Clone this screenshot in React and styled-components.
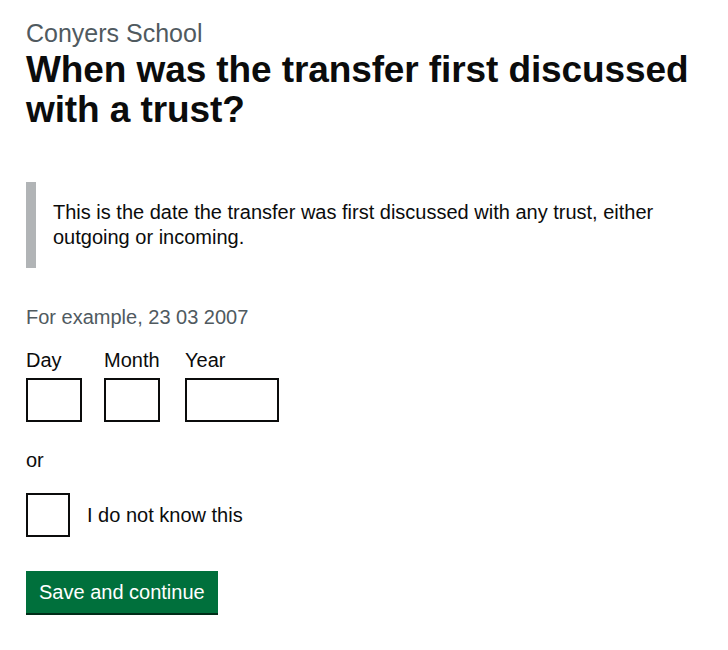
import React from "react";
import styled, { createGlobalStyle } from "styled-components";

const GlobalStyle = createGlobalStyle`
  body {
    margin: 0;
    background: #ffffff;
    font-family: "Liberation Sans", Arial, sans-serif;
    color: #0b0c0c;
  }
`;

const Page = styled.main`
  padding: 18px 26px 30px 26px;
`;

const Caption = styled.span`
  display: block;
  font-size: 25px;
  line-height: 30px;
  margin-bottom: 2px;
  color: #505a5f;
`;

const Heading = styled.h1`
  margin: 0 0 52px 0;
  font-size: 37px;
  line-height: 40px;
  font-weight: 700;
  letter-spacing: -0.1px;
`;

const Inset = styled.div`
  border-left: 10px solid #b1b4b6;
  padding: 18px 15px 18px 17px;
  max-width: 620px;
  font-size: 20px;
  line-height: 25px;
  margin-bottom: 37px;
`;

const Hint = styled.div`
  font-size: 20px;
  line-height: 25px;
  color: #505a5f;
  margin-bottom: 18px;
`;

const DateRow = styled.div`
  display: flex;
  gap: 22px;
`;

const DateItem = styled.div`
  display: flex;
  flex-direction: column;
  min-width: ${(p) => p.$width}px;
`;

const Label = styled.label`
  font-size: 20px;
  line-height: 25px;
  margin-bottom: 5px;
`;

const DateInput = styled.input`
  box-sizing: border-box;
  width: ${(p) => p.$width}px;
  height: 44px;
  border: 2px solid #0b0c0c;
  border-radius: 0;
  margin: 0;
  font: inherit;
`;

const Or = styled.p`
  margin: 26px 0 20px 0;
  font-size: 20px;
  line-height: 25px;
`;

const CheckRow = styled.div`
  display: flex;
  align-items: center;
  gap: 17px;
  margin-bottom: 34px;
`;

const CheckBox = styled.span`
  box-sizing: border-box;
  width: 44px;
  height: 44px;
  border: 2px solid #0b0c0c;
`;

const CheckLabel = styled.span`
  font-size: 20px;
  line-height: 25px;
`;

const Button = styled.button`
  background: #00703c;
  color: #ffffff;
  border: 0;
  border-radius: 0;
  box-shadow: 0 2px 0 #002d18;
  padding: 9px 13px 9px 13px;
  font-family: inherit;
  font-size: 20px;
  line-height: 24px;
  cursor: pointer;
`;

export default function App() {
  return (
    <>
      <GlobalStyle />
      <Page>
        <Caption>Conyers School</Caption>
        <Heading>When was the transfer first discussed with a trust?</Heading>
        <Inset>
          This is the date the transfer was first discussed with any trust, either outgoing or incoming.
        </Inset>
        <Hint>For example, 23 03 2007</Hint>
        <DateRow>
          <DateItem $width={56}>
            <Label>Day</Label>
            <DateInput $width={56} />
          </DateItem>
          <DateItem $width={59}>
            <Label>Month</Label>
            <DateInput $width={56} />
          </DateItem>
          <DateItem $width={94}>
            <Label>Year</Label>
            <DateInput $width={94} />
          </DateItem>
        </DateRow>
        <Or>or</Or>
        <CheckRow>
          <CheckBox />
          <CheckLabel>I do not know this</CheckLabel>
        </CheckRow>
        <Button>Save and continue</Button>
      </Page>
    </>
  );
}
